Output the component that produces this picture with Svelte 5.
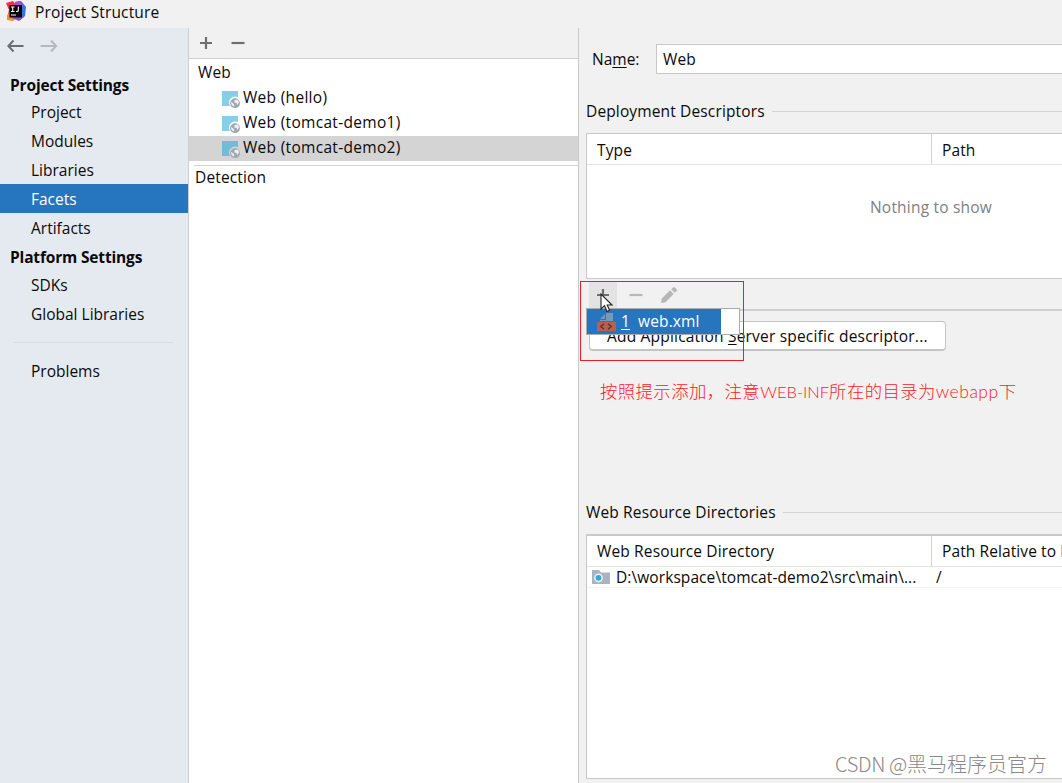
<script lang="ts">
  type NavItem = { label: string; kind?: "heading" | "separator" };

  const nav: NavItem[] = [
    { label: "Project Settings", kind: "heading" },
    { label: "Project" },
    { label: "Modules" },
    { label: "Libraries" },
    { label: "Facets" },
    { label: "Artifacts" },
    { label: "Platform Settings", kind: "heading" },
    { label: "SDKs" },
    { label: "Global Libraries" },
    { label: "", kind: "separator" },
    { label: "Problems" },
  ];
  const facets = ["Web (hello)", "Web (tomcat-demo1)", "Web (tomcat-demo2)"];

  let page = $state("Facets");
  let facet = $state("Web (tomcat-demo2)");
  let name = $state("Web");
</script>

{#snippet plus()}
  <svg width="14" height="14" viewBox="0 0 14 14"><path d="M7 1v12M1 7h12" stroke="#6e6e6e" stroke-width="2.2" /></svg>
{/snippet}

{#snippet minus(color: string)}
  <svg width="14" height="14" viewBox="0 0 14 14"><path d="M.5 7h13" stroke={color} stroke-width="2.2" /></svg>
{/snippet}

<div class="window">
  <header class="titlebar">
    <svg class="logo" width="20" height="20" viewBox="0 0 20 20">
      <path d="M0 2 7 0l4 5-2 9-5 3-2-4 1-4z" fill="#f0324f" />
      <path d="m1 14 4-3 6 6-4 3-6-1z" fill="#f88937" />
      <path d="m9 1 6-1 5 6-1 9-5 4-6-3z" fill="#3871e0" />
      <path d="m9 1 5-1 3 6-8-2z" fill="#b648cd" />
      <path d="m6 17 7 3 5-4-6-2z" fill="#874fd7" />
      <rect x="3.5" y="4" width="12.5" height="12.5" fill="#090609" />
      <path d="M5 6h3.5M6.7 6v4.5M5 10.5h3.5M12.3 5.5v3.7q0 1.3-1.4 1.3H10M5 14h5" fill="none" stroke="#fff" stroke-width="1.1" />
    </svg>
    <span>Project Structure</span>
  </header>

  <div class="body">
    <aside class="sidebar">
      <div class="history">
        <svg width="18" height="14" viewBox="0 0 18 14"><path d="M6.5 1.5 1.3 7l5.2 5.5M1.5 7h15" fill="none" stroke="#6b6d70" stroke-width="2" /></svg>
        <svg width="18" height="14" viewBox="0 0 18 14"><path d="M11 1.5 16.2 7 11 12.5M16 7H.5" fill="none" stroke="#b6b9be" stroke-width="2" /></svg>
      </div>
      <nav>
        {#each nav as item}
          {#if item.kind === "separator"}
            <hr />
          {:else if item.kind === "heading"}
            <h2>{item.label}</h2>
          {:else}
            <button class="nav-item" class:selected={page === item.label} onclick={() => (page = item.label)}>
              {item.label}
            </button>
          {/if}
        {/each}
      </nav>
    </aside>

    <section class="facets">
      <div class="toolbar">
        {@render plus()}
        {@render minus("#6e6e6e")}
      </div>
      <div class="tree">
        <div class="group">Web</div>
        {#each facets as f}
          <button class="facet" class:selected={facet === f} onclick={() => (facet = f)}>
            <svg width="19" height="18" viewBox="0 0 19 18">
              <path d="M0 0h16v6.2a6.2 6.2 0 0 0-8 8.8H0z" fill="#87cfe8" class="tile" />
              <circle cx="13" cy="12.2" r="4.9" fill="#a0a7b0" />
              <path d="m9.5 11 2.5 2.2.3 2.4q-3-.8-3.3-3.8zM12.5 9.2l2.8-.6q1.6 1 1.7 3l-1.5 2.4-1-2-2.2-.6z" fill="#eef1f3" />
            </svg>
            <span>{f}</span>
          </button>
        {/each}
        <div class="detection">Detection</div>
      </div>
    </section>

    <main>
      <div class="name-row">
        <label for="name">Na<u>m</u>e:</label>
        <input id="name" bind:value={name} />
      </div>

      <div class="caption first"><span>Deployment Descriptors</span></div>
      <div class="table descriptors">
        <div class="thead"><div>Type</div><div>Path</div></div>
        <div class="empty">Nothing to show</div>
      </div>

      <div class="actions">
        <span class="action pressed">{@render plus()}</span>
        <span class="action">{@render minus("#b9b9b9")}</span>
        <span class="action">
          <svg width="18" height="18" viewBox="0 0 18 18"><path d="m1 17 .8-4.5L10 4.3 13.7 8l-8.2 8.2zM11.2 3.2 13 1.4q1-1 2 0L16.6 3q1 1 0 2l-1.8 1.8z" fill="#b7b7b7" /></svg>
        </span>
        <div class="popup">
          <div class="popup-item">
            <svg width="20" height="20" viewBox="0 0 20 20">
              <path d="M3 7 8 2v5zM9 1h7v8H3V8h6z" fill="#7799b9" />
              <rect x="0" y="10" width="19" height="9" fill="#b7614c" />
              <path d="M7 11.8 3.8 14.5 7 17.2M11 11.8l3.2 2.7-3.2 2.7" fill="none" stroke="#582f34" stroke-width="1.3" />
            </svg>
            <u>1</u><span>web.xml</span>
          </div>
        </div>
        <svg class="pointer" width="14" height="20" viewBox="0 0 14 20"><path d="M1 1v15l3.5-3.3L7 18.5l2.6-1.2L7.2 12H12z" fill="#fff" stroke="#222" stroke-width="1.1" /></svg>
        <div class="highlight"></div>
      </div>

      <div class="server">
        <button class="add">Add Application <u>S</u>erver specific descriptor...</button>
      </div>
      <p class="note">按照提示添加，注意<span>WEB-INF</span>所在的目录为<span class="folder">webapp</span>下</p>

      <div class="caption"><span>Web Resource Directories</span></div>
      <div class="table resources">
        <div class="thead"><div>Web Resource Directory</div><div>Path Relative to Deployment Root</div></div>
        <div class="trow">
          <div class="dir">
            <svg width="18" height="14" viewBox="0 0 18 14">
              <path d="M0 0h7l2 2.5h9V14H0z" fill="#a9b4c0" />
              <circle cx="6.5" cy="7.8" r="4.4" fill="#e9f3f8" />
              <circle cx="6.5" cy="7.8" r="2.9" fill="#35a8d5" />
            </svg>
            <span>D:\workspace\tomcat-demo2\src\main\...</span>
          </div>
          <div>/</div>
        </div>
      </div>
      <div class="watermark"><span>CSDN @</span>黑马程序员官方</div>
    </main>
  </div>
</div>

<style>
  :global(body) {
    overflow: hidden;
  }
  .window {
    width: 1062px;
    height: 783px;
    display: flex;
    flex-direction: column;
    overflow: hidden;
    background: #f1f1f1;
    color: #0a0a0a;
    font: 15.5px/24px "Open Sans", "Noto Sans", sans-serif;
    letter-spacing: 0.14px;
    white-space: nowrap;
  }
  .window * {
    box-sizing: border-box;
  }
  svg {
    display: block;
    flex: none;
  }
  button,
  input {
    font: inherit;
    letter-spacing: inherit;
    color: inherit;
    border: 0;
    margin: 0;
    outline: 0;
  }
  u {
    text-underline-offset: 2px;
    text-decoration-thickness: 1px;
  }
  .titlebar {
    flex: none;
    height: 28px;
    display: flex;
    gap: 9px;
    padding-left: 6px;
  }
  .logo {
    margin-top: 1px;
  }
  .body {
    flex: 1;
    display: grid;
    grid-template-columns: 189px 389px 484px;
    min-height: 0;
  }
  .sidebar {
    background: #e5eaf1;
    border-right: 1px solid #cbced3;
    letter-spacing: 0;
  }
  .history {
    height: 43px;
    display: flex;
    gap: 15px;
    padding: 11px 0 0 7px;
  }
  nav {
    display: flex;
    flex-direction: column;
  }
  h2 {
    margin: 0;
    height: 28px;
    padding-left: 10px;
    font-size: 15.5px;
    line-height: 29px;
    font-weight: 700;
    letter-spacing: -0.16px;
  }
  h2:first-child {
    height: 27px;
  }
  .nav-item {
    height: 28.8px;
    padding: 0 0 0 31px;
    background: none;
    text-align: left;
  }
  .nav-item + h2 {
    margin-top: 1px;
  }
  .nav-item.selected {
    background: #2675bf;
    color: #fff;
  }
  hr {
    width: 159px;
    height: 1px;
    margin: 13px 0 14px 14px;
    border: 0;
    background: #d7dbe2;
  }
  .facets {
    background: #fff;
  }
  .toolbar {
    height: 31px;
    display: flex;
    gap: 18px;
    padding: 8px 0 0 10px;
    background: #f1f1f1;
    border-bottom: 1px solid #cfcfcf;
  }
  .group {
    height: 27px;
    padding: 1px 0 0 9px;
  }
  .facet {
    width: 100%;
    height: 25px;
    display: flex;
    gap: 2px;
    padding: 0 0 0 33px;
    background: none;
    text-align: left;
    line-height: 23px;
    letter-spacing: 0.3px;
  }
  .facet svg {
    margin-top: 5px;
  }
  .facet.selected {
    background: #d4d4d4;
  }
  .facet.selected .tile {
    fill: #72bcd5;
  }
  .detection {
    margin: 4px 0 0 5px;
    padding: 0 0 0 1px;
    border-top: 1px solid #d5d5d5;
    line-height: 23px;
  }
  main {
    position: relative;
    display: flex;
    flex-direction: column;
    min-width: 0;
    padding-left: 7px;
    border-left: 1px solid #c9c9c9;
  }
  .name-row {
    display: flex;
    height: 46px;
    padding: 16px 0 0 6px;
    line-height: 31px;
  }
  .name-row label {
    width: 64px;
    letter-spacing: 0;
  }
  .name-row input {
    flex: 1;
    min-width: 0;
    height: 30px;
    padding: 0 6px;
    background: #fff;
    border: 1px solid #c8c8c8;
    border-right: 0;
  }
  .caption {
    display: flex;
    align-items: center;
    gap: 7px;
    height: 24px;
  }
  .caption.first {
    margin-top: 25px;
  }
  .caption::after {
    content: "";
    flex: 1;
    height: 1px;
    background: #d4d4d4;
  }
  .table {
    flex: none;
    background: #fff;
    border: 1px solid #c9c9c9;
    border-right: 0;
    overflow: hidden;
  }
  .descriptors {
    height: 146px;
    margin-top: 10px;
  }
  .thead,
  .trow {
    display: grid;
    grid-template-columns: 344px 1fr;
    border-bottom: 1px solid #e3e3e3;
  }
  .thead {
    height: 31px;
    line-height: 32px;
  }
  .thead div {
    padding-left: 10px;
    overflow: hidden;
  }
  .thead div + div {
    border-left: 1px solid #d3d3d3;
    letter-spacing: 0.1px;
  }
  .empty {
    padding: 30px 0 0 283px;
    color: #808080;
    letter-spacing: 0.2px;
  }
  .actions {
    position: relative;
    display: flex;
    gap: 5px;
    height: 32px;
    padding-left: 3px;
    border-bottom: 2px solid #d0d0d0;
  }
  .action {
    display: grid;
    place-items: center;
    width: 28px;
    height: 26px;
    margin-top: 3px;
  }
  .pressed {
    background: #e3e3e3;
  }
  .popup {
    position: absolute;
    z-index: 2;
    left: 0;
    top: 29px;
    width: 154px;
    height: 27px;
    background: #fff;
    border: 1px solid #a8adb3;
  }
  .popup-item {
    display: flex;
    width: 134px;
    height: 25px;
    padding-left: 10px;
    background: #2675bf;
    color: #fff;
    line-height: 25px;
  }
  .popup-item svg {
    margin: 3px 4px 0 0;
  }
  .popup-item span {
    margin-left: 8px;
  }
  .pointer {
    position: absolute;
    z-index: 3;
    left: 14px;
    top: 14px;
  }
  .highlight {
    position: absolute;
    z-index: 4;
    left: -6px;
    top: 2px;
    width: 164px;
    height: 80px;
    border: 1px solid #ec2024;
  }
  .server {
    padding: 10px 0 0 3px;
  }
  .add {
    display: block;
    width: 357px;
    height: 30px;
    padding: 0 0 0 17px;
    text-align: left;
    background: #fff;
    border: 1px solid #c4c4c4;
    border-bottom-width: 2px;
    border-radius: 4px;
    letter-spacing: 0.2px;
  }
  .note {
    margin: 28px 0 0 14px;
    height: 121px;
    color: #fb1824;
    font: 300 17.4px/24px "Noto Sans CJK SC", sans-serif;
    letter-spacing: 0.4px;
  }
  .note span {
    font-family: Lato, sans-serif;
    font-size: 16.5px;
    font-weight: 300;
    letter-spacing: 0;
  }
  .note .folder {
    font-size: 17.5px;
    letter-spacing: 0.5px;
  }
  .resources {
    height: 245px;
    margin-top: 10px;
    border-top-width: 2px;
  }
  .trow {
    height: 21px;
    line-height: 21px;
    border-color: #f3f3f3;
    letter-spacing: 0.08px;
  }
  .resources .thead {
    line-height: 31px;
  }
  .trow > div {
    padding-left: 5px;
  }
  .dir {
    display: flex;
    gap: 6px;
  }
  .dir svg {
    margin-top: 3px;
  }
  .watermark {
    position: absolute;
    right: 15px;
    bottom: 6px;
    color: #888;
    font: 300 20px/26px "Noto Sans CJK SC", sans-serif;
    letter-spacing: 0;
  }
  .watermark span {
    letter-spacing: -0.3px;
  }
</style>
